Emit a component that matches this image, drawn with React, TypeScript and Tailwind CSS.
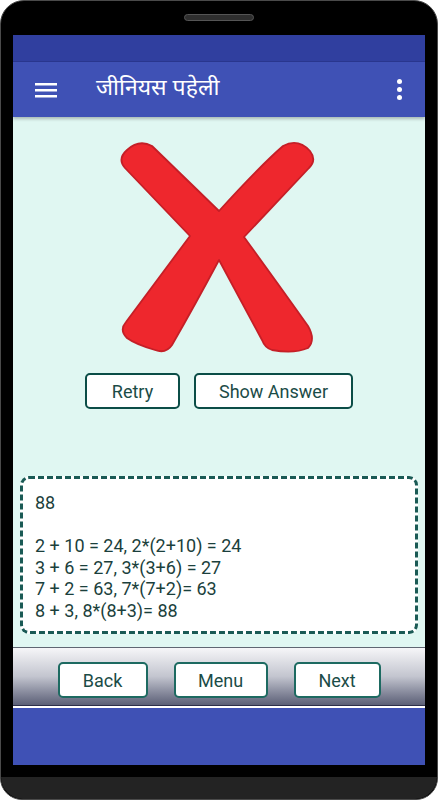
const XMark = () => (
  <svg viewBox="0 0 240 230" className="w-[240px] h-[230px]">
    <path
      d="M 25 38 Q 17 29 27 20 Q 39 9 52 16 L 119 81 Q 160 36 183 16 Q 198 8 210 21 Q 217 30 209 38 L 144 107 Q 181 158 208 196 Q 216 210 208 218 Q 194 224 172 220 Q 165 218 162 210 L 119 130 Q 95 175 72 215 Q 66 224 55 220 Q 35 214 27 208 Q 19 200 26 192 L 90 106 Z"
      fill="#ee272d"
      stroke="#c51f27"
      strokeWidth="1.8"
      strokeLinejoin="round"
    />
  </svg>
);

const OutlineButton = ({ label, width, dark }: { label: string; width: string; dark?: boolean }) => (
  <button
    className={`${width} h-[36px] bg-white rounded-[5px] border-2 ${
      dark ? 'border-[#0b4d47]' : 'border-[#1d6a61]'
    } text-[18px] text-[#1b4c47] flex items-center justify-center`}
  >
    {label}
  </button>
);

const App = () => {
  return (
    <div className="w-[438px] h-[800px] bg-white" style={{ fontFamily: 'Roboto, "Liberation Sans", sans-serif' }}>
      <div className="w-[438px] h-[800px] bg-black rounded-t-[24px] rounded-b-[22px] border border-[#4a4a4a] flex flex-col overflow-hidden">
        {/* top bezel */}
        <div className="h-[34px] flex justify-center pt-[13px]">
          <div className="w-[70px] h-[7px] rounded-full bg-[#2e2e2e] border border-[#555]" />
        </div>

        <div className="mx-[12px] flex flex-col h-[730px]">
          {/* status bar */}
          <div className="h-[27px] bg-[#303f9f] border-b border-[#2a3790]" />

          {/* toolbar */}
          <div className="h-[55px] bg-[#3f51b5] flex items-center px-[22px] shadow-[0_2px_3px_rgba(0,0,0,0.25)] relative z-10">
            <svg width="22" height="16" viewBox="0 0 22 16" className="mt-[1px]">
              <rect x="0" y="1" width="22" height="2.5" fill="white" />
              <rect x="0" y="7" width="22" height="2.5" fill="white" />
              <rect x="0" y="13" width="22" height="2.5" fill="white" />
            </svg>
            <span
              className="ml-[39px] text-white text-[23px] leading-none"
              style={{ fontFamily: '"Noto Sans Devanagari", "Noto Sans", sans-serif' }}
            >
              जीनियस पहेली
            </span>
            <div className="ml-auto mr-[1px] flex flex-col gap-[3px]">
              <div className="w-[5px] h-[5px] rounded-full bg-white" />
              <div className="w-[5px] h-[5px] rounded-full bg-white" />
              <div className="w-[5px] h-[5px] rounded-full bg-white" />
            </div>
          </div>

          {/* content */}
          <div className="h-[530px] bg-[#e0f7f2] flex flex-col items-center">
            <div className="mt-[13px] ml-[2px]">
              <XMark />
            </div>
            <div className="mt-[13px] flex gap-[14px]">
              <OutlineButton label="Retry" width="w-[95px]" dark />
              <OutlineButton label="Show Answer" width="w-[159px]" dark />
            </div>
            <div className="mt-auto mb-[13px] self-stretch mx-[7px] h-[158px] bg-white rounded-[9px] border-[3px] border-dashed border-[#1a5a55] pl-[12px] pt-[13px] text-[18px] leading-[21.5px] text-[#1b3f3c]">
              <div>88</div>
              <div>&nbsp;</div>
              <div>2 + 10 = 24, 2*(2+10) = 24</div>
              <div>3 + 6 = 27, 3*(3+6) = 27</div>
              <div>7 + 2 = 63, 7*(7+2)= 63</div>
              <div>8 + 3, 8*(8+3)= 88</div>
            </div>
          </div>

          {/* bottom nav */}
          <div className="h-[59px] bg-gradient-to-b from-[#f6f6f8] via-[#c3c5cf] to-[#5c6077] border-t border-[#5f6672] border-b border-b-[#2c2f4a] flex justify-center gap-[26px] pt-[14px]">
            <OutlineButton label="Back" width="w-[90px]" />
            <OutlineButton label="Menu" width="w-[94px]" />
            <OutlineButton label="Next" width="w-[87px]" />
          </div>
          <div className="h-[2px] bg-white" />

          {/* bottom blue area */}
          <div className="h-[57px] bg-[#3f51b5]" />
        </div>

        <div className="h-[12px]" />
        <div className="flex-1 bg-[#232323] rounded-b-[22px]" />
      </div>
    </div>
  );
};

export default App;
